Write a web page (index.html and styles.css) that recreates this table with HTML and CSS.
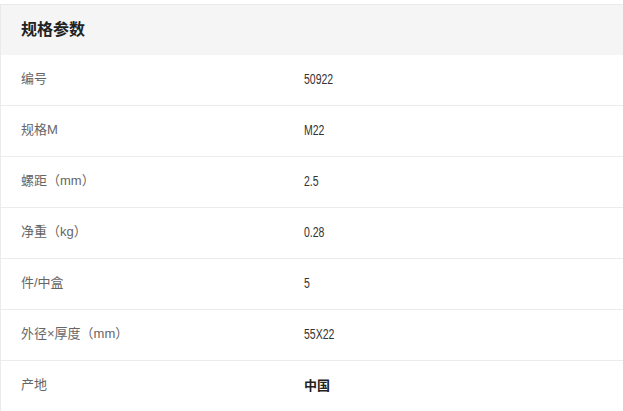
FILE: index.html
```html
<!DOCTYPE html>
<html lang="zh">
<head>
<meta charset="utf-8">
<link rel="stylesheet" href="styles.css">
</head>
<body>
<section class="spec">
  <div class="spec-head">规格参数</div>
  <div class="spec-row"><div class="k">编号</div><div class="v"><span class="num">50922</span></div></div>
  <div class="spec-row"><div class="k">规格M</div><div class="v"><span class="num">M22</span></div></div>
  <div class="spec-row"><div class="k">螺距（mm）</div><div class="v"><span class="num">2.5</span></div></div>
  <div class="spec-row"><div class="k">净重（kg）</div><div class="v"><span class="num">0.28</span></div></div>
  <div class="spec-row"><div class="k">件/中盒</div><div class="v"><span class="num">5</span></div></div>
  <div class="spec-row"><div class="k">外径×厚度（mm）</div><div class="v"><span class="num">55X22</span></div></div>
  <div class="spec-row"><div class="k">产地</div><div class="v strong">中国</div></div>
</section>
</body>
</html>
```
FILE: styles.css
```css
html, body {
  margin: 0;
  padding: 0;
  background: #fff;
}
body {
  padding-top: 4px;
  font-family: "Noto Sans CJK SC", "Liberation Sans", sans-serif;
}
.spec {
  border-top: 1px solid #eaeaea;
  border-left: 1px solid #eaeaea;
  width: 640px;
}
.spec-head {
  height: 50px;
  box-sizing: border-box;
  padding-bottom: 5px;
  background: #f5f5f5;
  display: flex;
  align-items: center;
  padding-left: 20px;
  font-size: 16px;
  font-weight: bold;
  color: #222;
}
.spec-row {
  display: grid;
  grid-template-columns: 283px 1fr;
  height: 50px;
  border-bottom: 1px solid #ececec;
  align-items: center;
}
.k, .v {
  line-height: 16px;
  margin-top: -3px;
}
.k {
  padding-left: 20px;
  font-family: "Liberation Sans", "Noto Sans CJK SC", sans-serif;
  font-size: 13px;
  color: #666;
}
.v {
  padding-left: 20px;
  font-family: "Liberation Sans", "Noto Sans CJK SC", sans-serif;
  font-size: 14px;
  color: #333;
}
.num {
  display: inline-block;
  transform: scaleX(0.75);
  transform-origin: left center;
}
.v.strong {
  font-family: "Noto Sans CJK SC", sans-serif;
  font-size: 13px;
  font-weight: bold;
  color: #222;
}
```
